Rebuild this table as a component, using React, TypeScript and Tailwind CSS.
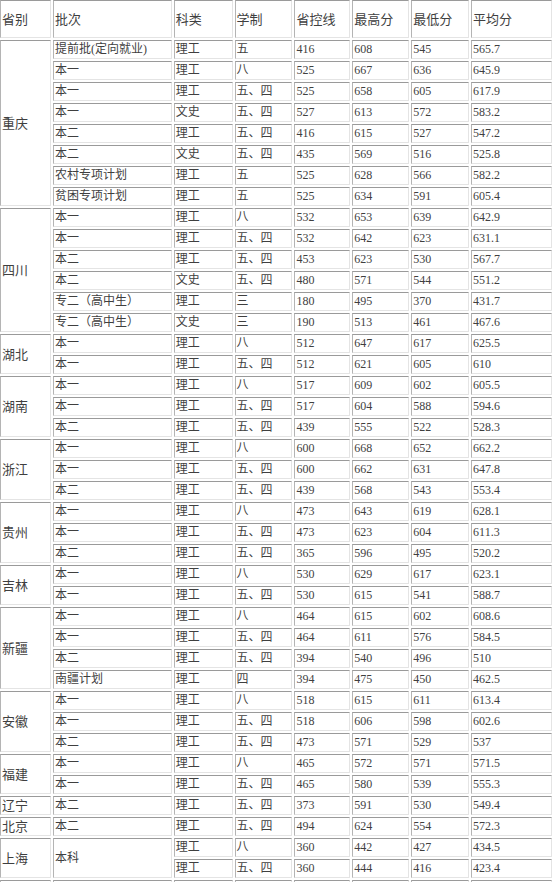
import React from "react";

type Row = [string, string, string, string, string, string, string];
type Group = { province: string; rows: Row[]; mergeBatch?: boolean };

const groups: Group[] = [
  {
    province: "重庆",
    rows: [
      ["提前批(定向就业)", "理工", "五", "416", "608", "545", "565.7"],
      ["本一", "理工", "八", "525", "667", "636", "645.9"],
      ["本一", "理工", "五、四", "525", "658", "605", "617.9"],
      ["本一", "文史", "五、四", "527", "613", "572", "583.2"],
      ["本二", "理工", "五、四", "416", "615", "527", "547.2"],
      ["本二", "文史", "五、四", "435", "569", "516", "525.8"],
      ["农村专项计划", "理工", "五", "525", "628", "566", "582.2"],
      ["贫困专项计划", "理工", "五", "525", "634", "591", "605.4"],
    ],
  },
  {
    province: "四川",
    rows: [
      ["本一", "理工", "八", "532", "653", "639", "642.9"],
      ["本一", "理工", "五、四", "532", "642", "623", "631.1"],
      ["本二", "理工", "五、四", "453", "623", "530", "567.7"],
      ["本二", "文史", "五、四", "480", "571", "544", "551.2"],
      ["专二（高中生）", "理工", "三", "180", "495", "370", "431.7"],
      ["专二（高中生）", "文史", "三", "190", "513", "461", "467.6"],
    ],
  },
  {
    province: "湖北",
    rows: [
      ["本一", "理工", "八", "512", "647", "617", "625.5"],
      ["本一", "理工", "五、四", "512", "621", "605", "610"],
    ],
  },
  {
    province: "湖南",
    rows: [
      ["本一", "理工", "八", "517", "609", "602", "605.5"],
      ["本一", "理工", "五、四", "517", "604", "588", "594.6"],
      ["本二", "理工", "五、四", "439", "555", "522", "528.3"],
    ],
  },
  {
    province: "浙江",
    rows: [
      ["本一", "理工", "八", "600", "668", "652", "662.2"],
      ["本一", "理工", "五、四", "600", "662", "631", "647.8"],
      ["本二", "理工", "五、四", "439", "568", "543", "553.4"],
    ],
  },
  {
    province: "贵州",
    rows: [
      ["本一", "理工", "八", "473", "643", "619", "628.1"],
      ["本一", "理工", "五、四", "473", "623", "604", "611.3"],
      ["本二", "理工", "五、四", "365", "596", "495", "520.2"],
    ],
  },
  {
    province: "吉林",
    rows: [
      ["本一", "理工", "八", "530", "629", "617", "623.1"],
      ["本一", "理工", "五、四", "530", "615", "541", "588.7"],
    ],
  },
  {
    province: "新疆",
    rows: [
      ["本一", "理工", "八", "464", "615", "602", "608.6"],
      ["本一", "理工", "五、四", "464", "611", "576", "584.5"],
      ["本二", "理工", "五、四", "394", "540", "496", "510"],
      ["南疆计划", "理工", "四", "394", "475", "450", "462.5"],
    ],
  },
  {
    province: "安徽",
    rows: [
      ["本一", "理工", "八", "518", "615", "611", "613.4"],
      ["本一", "理工", "五、四", "518", "606", "598", "602.6"],
      ["本二", "理工", "五、四", "473", "571", "529", "537"],
    ],
  },
  {
    province: "福建",
    rows: [
      ["本一", "理工", "八", "465", "572", "571", "571.5"],
      ["本一", "理工", "五、四", "465", "580", "539", "555.3"],
    ],
  },
  { province: "辽宁", rows: [["本二", "理工", "五、四", "373", "591", "530", "549.4"]] },
  { province: "北京", rows: [["本二", "理工", "五、四", "494", "624", "554", "572.3"]] },
  {
    province: "上海",
    mergeBatch: true,
    rows: [
      ["本科", "理工", "八", "360", "442", "427", "434.5"],
      ["本科", "理工", "五、四", "360", "444", "416", "423.4"],
    ],
  },
];

const headers = ["省别", "批次", "科类", "学制", "省控线", "最高分", "最低分", "平均分"];
const widths = ["w-[51px]", "w-[119px]", "w-[59px]", "w-[58px]", "w-[56px]", "w-[57px]", "w-[58px]", "w-[81px]"];

const cell =
  "border border-t-[#9a9a9a] border-l-[#b4b4b4] border-b-[#e4e4e4] border-r-[#e4e4e4] px-px py-0 text-left align-middle";

export default function App() {
  return (
    <div className="w-[554px] h-[882px] overflow-hidden bg-white">
      <table
        className="table-fixed border-separate border-spacing-[2px] -mt-[2px] -ml-[2px] text-[12px] leading-[15px] text-[#3f3f3f]"
        style={{ fontFamily: '"Liberation Serif", "Noto Sans CJK SC", serif' }}
      >
        <colgroup>
          {widths.map((w, i) => (
            <col key={i} className={w} />
          ))}
        </colgroup>
        <tbody>
          <tr>
            {headers.map((h) => (
              <td key={h} className={`${cell} h-[38px] text-[13px]`}>
                {h}
              </td>
            ))}
          </tr>
          {groups.map((g) =>
            g.rows.map((r, i) => (
              <tr key={g.province + i}>
                {i === 0 && (
                  <td rowSpan={g.rows.length} className={`${cell} text-[13px]`}>
                    {g.province}
                  </td>
                )}
                {(!g.mergeBatch || i === 0) && (
                  <td rowSpan={g.mergeBatch ? g.rows.length : 1} className={`${cell} h-[19px]`}>
                    {r[0]}
                  </td>
                )}
                {r.slice(1).map((v, j) => (
                  <td key={j} className={`${cell} h-[19px]`}>
                    {v}
                  </td>
                ))}
              </tr>
            ))
          )}
          <tr>
            {headers.map((h) => (
              <td key={h} className={`${cell} h-[19px]`}>
                &nbsp;
              </td>
            ))}
          </tr>
        </tbody>
      </table>
    </div>
  );
}
